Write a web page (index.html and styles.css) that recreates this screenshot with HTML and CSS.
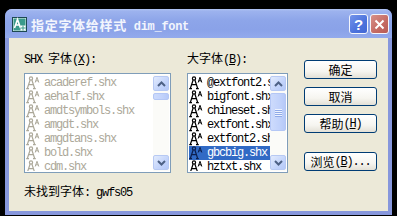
FILE: index.html
```html
<!DOCTYPE html>
<html>
<head>
<meta charset="utf-8">
<link rel="stylesheet" href="styles.css">
</head>
<body>
<div class="window">
  <div class="titlebar">
    <svg class="appicon" width="15" height="15" viewBox="0 0 15 15">
      <rect x="0.5" y="0.5" width="14" height="14" fill="#e8f4f0" stroke="#1d4a52"/>
      <rect x="1.5" y="1.5" width="12" height="12" fill="#3a9a8c"/>
      <path d="M2.5 11 L5.5 2.5 L8.5 11 M3.6 8 H7.4" stroke="#fff" stroke-width="1.6" fill="none"/>
      <rect x="8.5" y="8.5" width="5" height="5" fill="#fff"/>
      <path d="M8.5 11 H13.5 M11 8.5 V13.5" stroke="#3a9a8c" stroke-width="1"/>
    </svg>
    <div class="title"><span class="tcjk">指定字体给样式</span><span class="tlat"> dim_font</span></div>
    <div class="capbtns">
      <div class="cap help">?</div>
      <div class="cap close">
        <svg width="11" height="11" viewBox="0 0 11 11"><path d="M1.5 1.5 L9.5 9.5 M9.5 1.5 L1.5 9.5" stroke="#fff" stroke-width="2"/></svg>
      </div>
    </div>
  </div>
  <div class="client">
    <div class="col col-shx">
      <div class="label"><span class="a">SHX </span>字体<span class="a">(<u>X</u>):</span></div>
      <div class="listbox disabled">
        <div class="items">
          <div class="row"><svg class="fi"><use href="#fonticon"/></svg><span class="name">acaderef.shx</span></div>
          <div class="row"><svg class="fi"><use href="#fonticon"/></svg><span class="name">aehalf.shx</span></div>
          <div class="row"><svg class="fi"><use href="#fonticon"/></svg><span class="name">amdtsymbols.shx</span></div>
          <div class="row"><svg class="fi"><use href="#fonticon"/></svg><span class="name">amgdt.shx</span></div>
          <div class="row"><svg class="fi"><use href="#fonticon"/></svg><span class="name">amgdtans.shx</span></div>
          <div class="row"><svg class="fi"><use href="#fonticon"/></svg><span class="name">bold.shx</span></div>
          <div class="row"><svg class="fi"><use href="#fonticon"/></svg><span class="name">cdm.shx</span></div>
        </div>
        <div class="scroll">
          <div class="sbtn"><svg width="9" height="6" viewBox="0 0 9 6"><path d="M1 5 L4.5 1.5 L8 5" stroke="#4d6185" stroke-width="2" fill="none"/></svg></div>
          <div class="track"><div class="thumb small"></div></div>
          <div class="sbtn"><svg width="9" height="6" viewBox="0 0 9 6"><path d="M1 1 L4.5 4.5 L8 1" stroke="#4d6185" stroke-width="2" fill="none"/></svg></div>
        </div>
      </div>
      <div class="missing">未找到字体<span class="a">: gwfs05</span></div>
    </div>
    <div class="col col-big">
      <div class="label">大字体<span class="a">(<u>B</u>):</span></div>
      <div class="listbox">
        <div class="items">
          <div class="row"><svg class="fi"><use href="#fonticon"/></svg><span class="name">@extfont2.shx</span></div>
          <div class="row"><svg class="fi"><use href="#fonticon"/></svg><span class="name">bigfont.shx</span></div>
          <div class="row"><svg class="fi"><use href="#fonticon"/></svg><span class="name">chineset.shx</span></div>
          <div class="row"><svg class="fi"><use href="#fonticon"/></svg><span class="name">extfont.shx</span></div>
          <div class="row"><svg class="fi"><use href="#fonticon"/></svg><span class="name">extfont2.shx</span></div>
          <div class="row sel"><svg class="fi"><use href="#fonticon"/></svg><span class="name">gbcbig.shx</span></div>
          <div class="row"><svg class="fi"><use href="#fonticon"/></svg><span class="name">hztxt.shx</span></div>
        </div>
        <div class="scroll">
          <div class="sbtn"><svg width="9" height="6" viewBox="0 0 9 6"><path d="M1 5 L4.5 1.5 L8 5" stroke="#4d6185" stroke-width="2" fill="none"/></svg></div>
          <div class="track"><div class="thumb big"><span></span><span></span><span></span><span></span></div></div>
          <div class="sbtn"><svg width="9" height="6" viewBox="0 0 9 6"><path d="M1 1 L4.5 4.5 L8 1" stroke="#4d6185" stroke-width="2" fill="none"/></svg></div>
        </div>
      </div>
    </div>
    <div class="col col-btns">
      <div class="btn">确定</div>
      <div class="btn">取消</div>
      <div class="btn">帮助<span class="a">(<u>H</u>)</span></div>
      <div class="btn browse">浏览<span class="a">(<u>B</u>)...</span></div>
    </div>
  </div>
</div>
<svg width="0" height="0" class="defs">
  <defs>
    <g id="fonticon" fill="none" stroke-width="1.2">
      <circle cx="5" cy="2.4" r="1.6"/>
      <path d="M4.2 3.8 L1.4 12.2 M5.8 3.8 L8.6 12.2 M2.4 8.6 H7.6 M0.2 12.6 H3 M7 12.6 H9.8"/>
      <path d="M9.2 6.5 L11 1.3 L12.8 6.5 M9.8 4.8 H12.2" stroke-width="1"/>
    </g>
  </defs>
</svg>
</body>
</html>
```

FILE: styles.css
```css
html, body {
  margin: 0;
  padding: 0;
}
body {
  background: #000;
  width: 397px;
  height: 216px;
  overflow: hidden;
  font-family: "Noto Sans CJK SC", sans-serif;
  font-size: 12px;
  color: #000;
}
.defs {
  position: absolute;
}
.window {
  margin: 9px 0 0 5px;
  width: 387px;
  height: 206px;
  background: #8797dc;
  border-radius: 7px 7px 0 0;
  display: flex;
  flex-direction: column;
  padding-bottom: 4px;
  box-sizing: border-box;
}
.titlebar {
  height: 29px;
  flex: none;
  border-radius: 7px 7px 0 0;
  background: linear-gradient(#b3c4f4 0, #9db3ee 2px, #8da5e9 40%, #8aa2e8 70%, #93aaec 100%);
  display: flex;
  align-items: center;
  padding: 0 3px 0 7px;
}
.appicon {
  flex: none;
  margin-right: 4px;
  margin-top: 1px;
}
.title {
  color: #f2f5fd;
  display: flex;
  align-items: baseline;
  white-space: pre;
  margin-top: 1px;
}
.tcjk {
  font-size: 13px;
  font-weight: bold;
  letter-spacing: 0.7px;
}
.tlat {
  font-family: "Liberation Mono", monospace;
  font-size: 12px;
  font-weight: bold;
  letter-spacing: -0.3px;
}
.capbtns {
  margin-left: auto;
  display: flex;
  gap: 2px;
  margin-top: 1px;
}
.cap {
  width: 19px;
  height: 20px;
  box-sizing: border-box;
  border: 1px solid #f4f6fc;
  border-radius: 3px;
  display: flex;
  align-items: center;
  justify-content: center;
  color: #fff;
}
.help {
  background: linear-gradient(135deg, #7494ea, #4c72dc 60%, #4367d4);
  font-family: "Liberation Sans", sans-serif;
  font-weight: bold;
  font-size: 15px;
}
.close {
  background: linear-gradient(135deg, #d8918a, #c46a63 60%, #b85c56);
}
.client {
  flex: 1;
  margin: 0 4px;
  background: #ece9d8;
  display: flex;
  padding: 14px 0 0 15px;
  gap: 16px;
}
.col {
  display: flex;
  flex-direction: column;
}
.col-shx {
  width: 147px;
}
.col-big {
  width: 101px;
}
.col-btns {
  width: 73px;
  padding-top: 8px;
  gap: 8px;
}
.label {
  height: 12px;
  line-height: 12px;
  margin-bottom: 9px;
  white-space: nowrap;
}
.a {
  font-family: "Liberation Mono", monospace;
  font-size: 12px;
  letter-spacing: -1.2px;
}
.listbox {
  height: 100px;
  box-sizing: border-box;
  border: 1px solid #7f9db9;
  background: #fff;
  padding: 1px;
  display: flex;
}
.items {
  flex: 1;
  overflow: hidden;
  padding-top: 1px;
}
.row {
  height: 14px;
  display: flex;
  align-items: center;
  white-space: nowrap;
}
.fi {
  width: 14px;
  height: 14px;
  flex: none;
  stroke: #000;
  margin-right: 4px;
}
.name {
  font-family: "Liberation Mono", monospace;
  font-size: 12px;
  letter-spacing: -1.2px;
  line-height: 14px;
}
.disabled .name {
  color: #aca899;
}
.disabled .fi {
  stroke: #aca899;
}
.row.sel {
  background: #316ac5;
  color: #fff;
}
.row.sel .fi {
  stroke: #0c1f4e;
}
.scroll {
  width: 16px;
  flex: none;
  display: flex;
  flex-direction: column;
  background: #fbfbf8;
  padding: 1px 0;
}
.sbtn {
  height: 15px;
  box-sizing: border-box;
  border: 1px solid #b7c9f3;
  border-radius: 2px;
  background: linear-gradient(135deg, #e2ebfd, #c3d4fb 60%, #b4c8f8);
  display: flex;
  align-items: center;
  justify-content: center;
}
.track {
  flex: 1;
  display: flex;
  flex-direction: column;
  padding-top: 2px;
}
.thumb {
  box-sizing: border-box;
  border: 1px solid #b4c7f5;
  border-radius: 2px;
  background: linear-gradient(90deg, #cddbfc, #c1d2fb 60%, #b6c9f8);
  display: flex;
  flex-direction: column;
  align-items: center;
  justify-content: center;
  gap: 1px;
}
.thumb.small {
  height: 7px;
}
.thumb.big {
  height: 38px;
}
.thumb span {
  width: 7px;
  height: 1px;
  background: #eef3fe;
  box-shadow: 0 1px 0 #8faae8;
}
.missing {
  margin-top: 12px;
  height: 12px;
  line-height: 12px;
  white-space: nowrap;
}
.btn {
  height: 19px;
  box-sizing: border-box;
  border: 1px solid #003c74;
  border-radius: 3px;
  background: linear-gradient(#ffffff, #f6f5f0 60%, #e3e0d6);
  display: flex;
  align-items: center;
  justify-content: center;
  line-height: 12px;
  white-space: nowrap;
}
.btn.browse {
  margin-top: 11px;
}
```
